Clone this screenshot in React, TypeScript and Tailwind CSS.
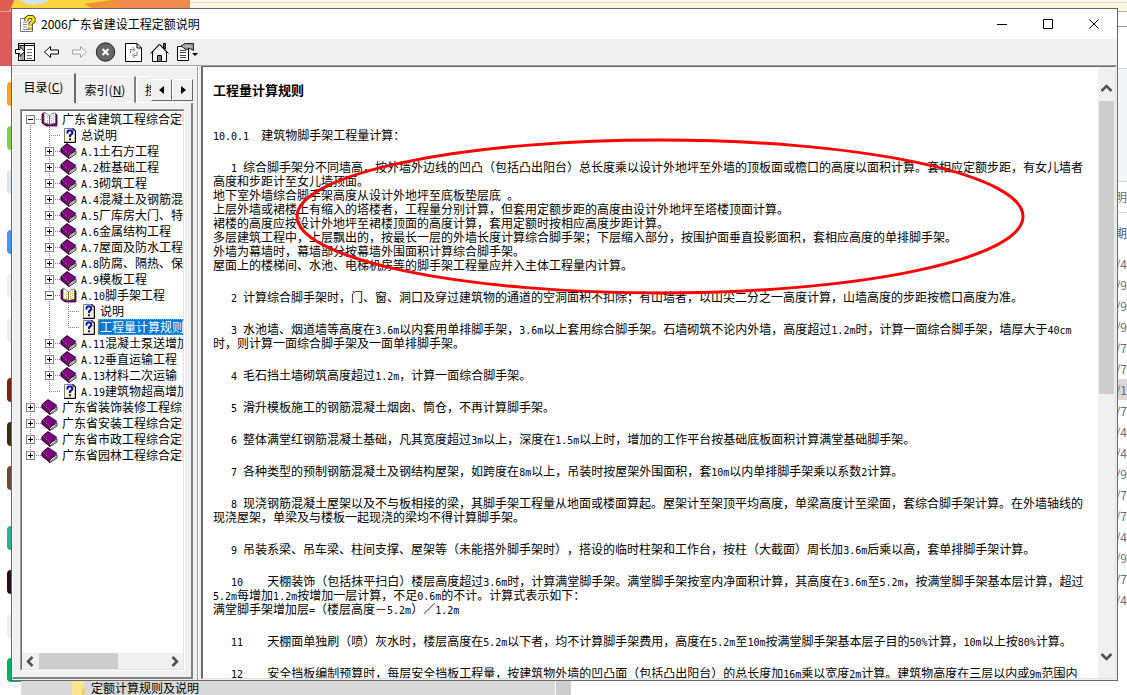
import React, { useState } from 'react';

type TreeNode = { label: string; kind: 'book' | 'open' | 'page'; rails: string };

// rails: one letter per indent cell
// v = line passing through, t = tee, l = last corner, f = first row, + / - = expander, p = expander on the last row
const TREE: TreeNode[] = [
  { label: '广东省建筑工程综合定额', kind: 'open', rails: 'f' },
  { label: '总说明', kind: 'page', rails: 'vt' },
  { label: 'A.1土石方工程', kind: 'book', rails: 'v+' },
  { label: 'A.2桩基础工程', kind: 'book', rails: 'v+' },
  { label: 'A.3砌筑工程', kind: 'book', rails: 'v+' },
  { label: 'A.4混凝土及钢筋混凝土工程', kind: 'book', rails: 'v+' },
  { label: 'A.5厂库房大门、特种门', kind: 'book', rails: 'v+' },
  { label: 'A.6金属结构工程', kind: 'book', rails: 'v+' },
  { label: 'A.7屋面及防水工程', kind: 'book', rails: 'v+' },
  { label: 'A.8防腐、隔热、保温工程', kind: 'book', rails: 'v+' },
  { label: 'A.9模板工程', kind: 'book', rails: 'v+' },
  { label: 'A.10脚手架工程', kind: 'open', rails: 'v-' },
  { label: '说明', kind: 'page', rails: 'vvt' },
  { label: '工程量计算规则', kind: 'page', rails: 'vvl' },
  { label: 'A.11混凝土泵送增加费', kind: 'book', rails: 'v+' },
  { label: 'A.12垂直运输工程', kind: 'book', rails: 'v+' },
  { label: 'A.13材料二次运输', kind: 'book', rails: 'v+' },
  { label: 'A.19建筑物超高增加费', kind: 'page', rails: 'vl' },
  { label: '广东省装饰装修工程综合定额', kind: 'book', rails: '+' },
  { label: '广东省安装工程综合定额', kind: 'book', rails: '+' },
  { label: '广东省市政工程综合定额', kind: 'book', rails: '+' },
  { label: '广东省园林工程综合定额', kind: 'book', rails: 'p' },
];

const PARAGRAPHS = [
  '10.0.1  建筑物脚手架工程量计算：',
  `   1 综合脚手架分不同墙高，按外墙外边线的凹凸（包括凸出阳台）总长度乘以设计外地坪至外墙的顶板面或檐口的高度以面积计算。套相应定额步距，有女儿墙者高度和步距计至女儿墙顶面。
地下室外墙综合脚手架高度从设计外地坪至底板垫层底 。
上层外墙或裙楼上有缩入的塔楼者，工程量分别计算，但套用定额步距的高度由设计外地坪至塔楼顶面计算。
裙楼的高度应按设计外地坪至裙楼顶面的高度计算，套用定额时按相应高度步距计算。
多层建筑工程中，上层飘出的，按最长一层的外墙长度计算综合脚手架；下层缩入部分，按围护面垂直投影面积，套相应高度的单排脚手架。
外墙为幕墙时，幕墙部分按幕墙外围面积计算综合脚手架。
屋面上的楼梯间、水池、电梯机房等的脚手架工程量应并入主体工程量内计算。`,
  '   2 计算综合脚手架时，门、窗、洞口及穿过建筑物的通道的空洞面积不扣除；有山墙者，以山尖二分之一高度计算，山墙高度的步距按檐口高度为准。',
  '   3 水池墙、烟道墙等高度在3.6m以内套用单排脚手架，3.6m以上套用综合脚手架。石墙砌筑不论内外墙，高度超过1.2m时，计算一面综合脚手架，墙厚大于40cm时，则计算一面综合脚手架及一面单排脚手架。',
  '   4 毛石挡土墙砌筑高度超过1.2m，计算一面综合脚手架。',
  '   5 滑升模板施工的钢筋混凝土烟囱、筒仓，不再计算脚手架。',
  '   6 整体满堂红钢筋混凝土基础，凡其宽度超过3m以上，深度在1.5m以上时，增加的工作平台按基础底板面积计算满堂基础脚手架。',
  '   7 各种类型的预制钢筋混凝土及钢结构屋架，如跨度在8m以上，吊装时按屋架外围面积，套10m以内单排脚手架乘以系数2计算。',
  '   8 现浇钢筋混凝土屋架以及不与板相接的梁，其脚手架工程量从地面或楼面算起。屋架计至架顶平均高度，单梁高度计至梁面，套综合脚手架计算。在外墙轴线的现浇屋架，单梁及与楼板一起现浇的梁均不得计算脚手架。',
  '   9 吊装系梁、吊车梁、柱间支撑、屋架等（未能搭外脚手架时），搭设的临时柱架和工作台，按柱（大截面）周长加3.6m后乘以高，套单排脚手架计算。',
  `   10    天棚装饰（包括抹平扫白）楼层高度超过3.6m时，计算满堂脚手架。满堂脚手架按室内净面积计算，其高度在3.6m至5.2m，按满堂脚手架基本层计算，超过5.2m每增加1.2m按增加一层计算，不足0.6m的不计。计算式表示如下：
满堂脚手架增加层=（楼层高度－5.2m）／1.2m`,
  '   11    天棚面单独刷（喷）灰水时，楼层高度在5.2m以下者，均不计算脚手架费用，高度在5.2m至10m按满堂脚手架基本层子目的50%计算，10m以上按80%计算。',
  '   12    安全挡板编制预算时，每层安全挡板工程量，按建筑物外墙的凹凸面（包括凸出阳台）的总长度加16m乘以宽度2m计算。建筑物高度在三层以内或9m范围内',
];

const DATES = ['/4', '/9', '/9', '/9', '/7', '/7', '/1', '/7', '/4', '/4', '/9', '/7', '/7', '/4', '/9', '/7', '/4'];

const DOCK = [
  ['bg-[#ff9d1e]', 'bg-[#7fd04f]', 'bg-[#dfe5f0]'],
  ['bg-[#4394ff]', 'bg-[#efefef]', 'bg-[#ececec]'],
  ['bg-[#7a2312]', 'bg-[#3a2d12]', 'bg-[#6b4a38]'],
  ['bg-[#25b58a]', 'bg-[#2b0a1e]', 'bg-[#eeeeee]', 'bg-[#06b25f]'],
];

// half-width runs are set in a monospace face so they take half of a Chinese character
function Mixed({ text }: { text: string }) {
  return (
    <>
      {text.split(/([ -~]+)/).map((part, i) =>
        i % 2 === 1 ? (
          <span key={i} className="font-['DejaVu_Sans_Mono',monospace] text-[10px] leading-none">{part}</span>
        ) : (
          part
        )
      )}
    </>
  );
}

function Rail({ type }: { type: string }) {
  const box = '+-pf'.includes(type);
  const plus = type === '+' || type === 'p';
  const up = type !== 'f';
  const down = type !== 'l' && type !== 'p';
  return (
    <svg width="19" height="16" viewBox="0 0 19 16" className="shrink-0" shapeRendering="crispEdges" fill="none">
      <g stroke="#808080" strokeDasharray="1 1">
        {up && <path d="M8.5 0V8" />}
        {down && <path d="M8.5 8V16" />}
        {type !== 'v' && <path d="M8 8.5H19" />}
      </g>
      {box && (
        <>
          <rect x="4.5" y="4.5" width="8" height="8" fill="#fff" stroke="#808080" />
          <path d={plus ? 'M6 8.5H11M8.5 6V11' : 'M6 8.5H11'} stroke="#000" />
        </>
      )}
    </svg>
  );
}

function NodeIcon({ kind }: { kind: TreeNode['kind'] }) {
  if (kind === 'page') {
    return (
      <svg width="19" height="16" viewBox="0 0 19 16" className="shrink-0">
        <path d="M4.500 1.500H13L15 3V15H4.500Z" fill="#ffffc8" stroke="#808080" />
        <path d="M15.500 3V15.500H4" fill="none" stroke="#000" />
        <path d="M13 1V3H15" fill="none" stroke="#000" />
        <path d="M7.500 6.500V4.500L8.500 3.500H11L12.200 4.500V6.500L10 8.500V10M10 11.300V13.300" fill="none" stroke="#0000e0" strokeWidth="2" />
      </svg>
    );
  }
  if (kind === 'open') {
    return (
      <svg width="19" height="16" viewBox="0 0 19 16" className="shrink-0">
        <path d="M1 3L3 2V12L8 13.500L15 12V3L16 4V15H5L1 12Z" fill="#800080" stroke="#300030" strokeWidth=".8" />
        <path d="M3 1L6.500 3L8.500 5V13.500L6 12.500L3 12Z" fill="#fff" stroke="#555" strokeWidth=".8" />
        <path d="M8.500 13.500V5L11 2.500L14.500 2V12L10.500 13Z" fill="#fff" stroke="#555" strokeWidth=".8" />
        <path d="M6.500 5V12M10.500 5V12M12.500 4V11" stroke="#c8c000" strokeDasharray="1 1" />
      </svg>
    );
  }
  return (
    <svg width="19" height="16" viewBox="0 0 19 16" className="shrink-0">
      <path d="M1 6L8 12.500L16 8V11L9 15.500L1 9Z" fill="#fff" stroke="#000" strokeWidth=".8" />
      <path d="M1 5.500L7 .5L16 6.500L9 12.500Z" fill="#800080" stroke="#000" strokeWidth=".8" />
      <path d="M1 5.500L9 12.500V15.500L1 9Z" fill="#800080" stroke="#000" strokeWidth=".6" />
      <path d="M2 5.500L9 11.500" stroke="#e0b0e0" strokeWidth=".8" strokeDasharray="1 1" />
      <path d="M10 13.500L16 9.500" stroke="#808080" />
    </svg>
  );
}

function Chevron({ d }: { d: string }) {
  return (
    <svg width="13" height="13" viewBox="0 0 13 13" fill="none" stroke="#505050" strokeWidth="2.500">
      <path d={d} />
    </svg>
  );
}

const TOOLS = [
  {
    name: '隐藏',
    icon: (
      <>
        <rect x="6.500" y="1.500" width="16" height="17" fill="#fff" stroke="#000" />
        <path d="M7 3.500H22M12.500 2V18" stroke="#000" />
        <path d="M8 4H12V18H8Z" fill="#a8a8a8" />
        <path d="M15 7.500H20M15 10.500H20M15 13.500H20M15 16.500H20" stroke="#707070" />
        <path d="M3.500 7.500H8V4.500L12.500 9.500L8 14.500V11.500H3.500Z" fill="#fff" stroke="#000" />
      </>
    ),
  },
  { name: '后退', icon: <path d="M5.500 10L11.500 4.500V8H19.500V12H11.500V15.500Z" fill="#fff" stroke="#000" /> },
  { name: '前进', icon: <path d="M20.500 10L14.500 4.500V8H6.500V12H14.500V15.500Z" fill="#f6f6f6" stroke="#a0a0a0" /> },
  {
    name: '停止',
    icon: (
      <>
        <circle cx="12.500" cy="10" r="9.200" fill="#666" stroke="#222" />
        <path d="M9.500 7L15.500 13M15.500 7L9.500 13" stroke="#fff" strokeWidth="2" />
      </>
    ),
  },
  {
    name: '刷新',
    icon: (
      <>
        <path d="M5.500 1.500H17L21.500 6V19.500H5.500Z" fill="#fff" stroke="#000" />
        <path d="M17 1.500V6H21.500" fill="none" stroke="#000" />
        <path d="M10.500 11V7.500H14M12.500 5L15 7.500L12.500 10M17 9.500V13.500H13.500M15 11L12.500 13.500L15 16" fill="none" stroke="#808080" />
      </>
    ),
  },
  {
    name: '主页',
    icon: (
      <>
        <path d="M16.500 1.500H18.500V7H16.500Z" fill="#555" stroke="#000" />
        <path d="M5.500 10V19.500H19.500V10L12.500 2.500Z" fill="#fff" stroke="#000" />
        <path d="M3.500 11.500L12.500 2L21.500 11.500" fill="none" stroke="#000" />
        <path d="M10.500 19.500V13.500H14.500V19.500Z" fill="#777" stroke="#000" />
      </>
    ),
  },
  {
    name: '选项',
    icon: (
      <>
        <path d="M3.500 4.500H14.500V18.500H3.500Z" fill="#fff" stroke="#000" />
        <path d="M6 8.500H12M6 10.500H12M6 13.500H12M6 15.500H12" stroke="#444" />
        <path d="M7 4L11 1.500H19.500V8.500L16 6.500L12 7.500Z" fill="#999" stroke="#222" />
        <path d="M9 4.500H16M12 3L18 5.500" stroke="#ddd" strokeDasharray="1 1" />
        <path d="M18 11H24L21 14Z" fill="#000" />
      </>
    ),
  },
];

function HelpWindow() {
  const [selected, setSelected] = useState(13);

  return (
    <div className="absolute top-2 right-[9px] bottom-[14px] left-[11px] flex flex-col border border-[#696969] bg-[#f0f0f0] text-black">
      <header className="flex h-[30px] shrink-0 items-center bg-white">
        <svg width="18" height="18" viewBox="0 0 18 18" className="ml-[7px]">
          <path d="M1.500 3.500H11.500L13.500 5.500V16.500H1.500Z" fill="#fff" stroke="#777" />
          <path d="M4 7H9M4 9.500H8M4 12H8M4 14.500H10" stroke="#888" />
          <path d="M7.500 6V3.500L9.500 2H13L14.500 3.500V6L11.500 8.500V10.500M11.500 12V14.500" fill="none" stroke="#222" strokeWidth="4" />
          <path d="M7.500 6V3.500L9.500 2H13L14.500 3.500V6L11.500 8.500V10.500M11.500 12V14.500" fill="none" stroke="#ffef00" strokeWidth="2.400" />
        </svg>
        <h1 className="ml-1 flex-1 truncate text-xs">2006广东省建设工程定额说明</h1>
        {[
          ['最小化', 'M0 5.5H10'],
          ['最大化', 'M.5 .5H9.5V9.5H.5Z'],
          ['关闭', 'M.5 .5L9.500 9.500M9.500 .5L.5 9.500'],
        ].map(([name, d]) => (
          <button key={name} aria-label={name} className="flex h-full w-[46px] items-center justify-center hover:bg-gray-200">
            <svg width="10" height="10" viewBox="0 0 10 10" fill="none" stroke="#000"><path d={d} /></svg>
          </button>
        ))}
      </header>

      <div className="flex h-[26px] shrink-0 items-center">
        {TOOLS.map((tool) => (
          <button key={tool.name} aria-label={tool.name} className="h-full w-[27px]">
            <svg width="27" height="21" viewBox="0 0 27 21" fill="none">{tool.icon}</svg>
          </button>
        ))}
      </div>

      <div className="flex min-h-0 flex-1 border-t border-[#a0a0a0]">
        <nav className="flex w-[186px] shrink-0 flex-col border-t border-r border-t-white border-r-[#a0a0a0]">
          <div className="flex h-9 shrink-0 items-end overflow-hidden">
            <button className="flex h-[30px] w-[64px] items-center justify-center rounded-tl-sm border-t border-r-2 border-l border-t-white border-r-[#696969] border-l-white pb-1 text-xs">
              目录(<u>C</u>)
            </button>
            <button className="flex h-[27px] w-[60px] items-center justify-center border-t border-r-2 border-b border-t-white border-r-[#808080] border-b-white text-xs">
              索引(<u>N</u>)
            </button>
            <div className="flex h-[27px] min-w-0 flex-1 border-b border-white">
              <button className="w-[15px] shrink-0 overflow-hidden border-t border-l border-white pl-2 text-left text-xs whitespace-nowrap">搜索(<u>S</u>)</button>
              {['M7 1V9L2 5Z', 'M3 1V9L8 5Z'].map((d, i) => (
                <button
                  key={d}
                  aria-label={i ? '后一个标签' : '前一个标签'}
                  className="mt-[3px] flex h-[22px] w-[21px] shrink-0 items-center justify-center border border-t-white border-r-[#696969] border-b-[#696969] border-l-white bg-[#f0f0f0]"
                >
                  <svg width="10" height="10" viewBox="0 0 10 10"><path d={d} /></svg>
                </button>
              ))}
            </div>
          </div>

          <div className="mr-1 mb-px flex min-h-0 flex-1 flex-col border-r-2 border-b-2 border-l border-r-[#808080] border-b-[#808080] border-l-white pt-1.5 pr-1.5 pb-1.5 pl-[7px]">
            <div className="flex min-h-0 flex-1 flex-col border border-t-[#a0a0a0] border-r-white border-b-white border-l-[#a0a0a0]">
              <div className="flex min-h-0 flex-1 flex-col border border-t-[#696969] border-r-[#e3e3e3] border-b-[#e3e3e3] border-l-[#696969] bg-white">
                <ul className="min-h-0 flex-1 overflow-hidden">
                  {TREE.map((node, i) => (
                    <li key={node.label} className="flex h-4">
                      {node.rails.split('').map((r, j) => <Rail key={j} type={r} />)}
                      <NodeIcon kind={node.kind} />
                      <button
                        onClick={() => setSelected(i)}
                        className={`h-4 px-[2px] text-xs leading-4 whitespace-nowrap ${
                          i === selected ? 'bg-[#0078d7] text-white outline outline-dotted -outline-offset-1 outline-[#ff8728]' : ''
                        }`}
                      >
                        <Mixed text={node.label} />
                      </button>
                    </li>
                  ))}
                </ul>
                <div className="flex h-4 shrink-0 items-center bg-[#f0f0f0]">
                  <span className="flex w-[17px] justify-center"><Chevron d="M8.500 2L4 6.500L8.500 11" /></span>
                  <span className="h-full w-[49%] bg-[#cdcdcd]" />
                  <span className="ml-auto flex w-[17px] justify-center"><Chevron d="M4.500 2L9 6.500L4.500 11" /></span>
                </div>
              </div>
            </div>
          </div>
        </nav>

        <div className="w-[3px] shrink-0 border-l border-white" />

        <main className="mr-px mb-px flex min-w-0 flex-1 border-t border-r border-b border-l-2 border-t-[#696969] border-r-[#e3e3e3] border-b-[#e3e3e3] border-l-[#696969] bg-white">
          <article className="relative min-w-0 flex-1 overflow-hidden px-[10px] pt-4 text-xs leading-[14px] whitespace-pre-wrap">
            <h2 className="mb-[31px] text-[13px] leading-[14px] font-bold">工程量计算规则</h2>
            <div className="flex flex-col gap-[18px]">
              {PARAGRAPHS.map((p) => (
                <p key={p}><Mixed text={p} /></p>
              ))}
            </div>
            <svg width="730" height="158" viewBox="0 0 730 158" className="pointer-events-none absolute top-[71px] left-[92px]">
              <ellipse cx="365" cy="78.500" rx="363" ry="76.500" fill="none" stroke="#f00" strokeWidth="3" />
            </svg>
          </article>
          <div className="flex w-[17px] shrink-0 flex-col items-center bg-[#f0f0f0]">
            <span className="flex h-[34px] shrink-0 items-end pb-[6px]"><Chevron d="M1.500 9L6.500 4L11.500 9" /></span>
            <span className="h-[48%] w-[15px] bg-[#cdcdcd]" />
            <span className="mt-auto flex h-[34px] shrink-0 items-start pt-[6px]"><Chevron d="M1.500 4L6.500 9L11.500 4" /></span>
          </div>
        </main>
      </div>
    </div>
  );
}

export default function App() {
  return (
    <div className="relative flex h-screen flex-col overflow-hidden bg-white font-['Noto_Sans_CJK_SC',sans-serif] [text-spacing-trim:space-all]">
      {/* desktop behind the help window */}
      <div className="flex h-3 shrink-0 border-b border-[#b8aea0] bg-[#fdf5e6]">
        <svg width="190" height="11" viewBox="0 0 190 11" className="shrink-0">
          <rect width="190" height="11" fill="#f0913c" />
          <path d="M0 0H18L8 11H0Z" fill="#e05c50" />
          <path d="M14 0H112L84 4L98 11H10Z" fill="#f9d43c" />
          <path d="M112 0H190V11H130Z" fill="#ef8a4a" />
          <ellipse cx="34" cy="-4" rx="16" ry="9" fill="#cfe4ee" />
        </svg>
        <div className="mb-2 flex-1 border-b border-[#e8dcc8] bg-[#fffaf0]" />
      </div>

      <div className="flex min-h-0 flex-1 justify-between">
        <div className="flex w-[22px] shrink-0 flex-col">
          <div className="h-[54px] shrink-0 bg-[#dc5a5c]" />
          <div className="flex flex-col gap-9 pt-4 pl-[7px]">
            {DOCK.map((group, i) => (
              <div key={i} className="flex flex-col gap-5">
                {group.map((color) => <span key={color} className={`h-6 rounded-l ${color}`} />)}
              </div>
            ))}
          </div>
        </div>

        <aside className="flex w-6 shrink-0 flex-col text-xs whitespace-nowrap text-[#6d6d6d]">
          <div className="h-[15px] shrink-0 border-b border-[#999]" />
          <div className="h-[42px] shrink-0 border-b border-[#d5d5d5]" />
          <div className="h-[113px] shrink-0 border-b border-[#d5d5d5] bg-[#f4f5f8]" />
          <div className="flex h-[31px] shrink-0 items-center justify-end border-b border-[#d5d5d5]">说明</div>
          <div className="flex h-10 shrink-0 items-center justify-end text-[#43587a]">日期</div>
          {DATES.map((d, i) => (
            <div key={i} className={`flex h-[21px] shrink-0 items-center justify-end ${i === 6 ? 'bg-[#d9d9d9]' : ''}`}>{d}</div>
          ))}
        </aside>
      </div>

      <footer className="flex h-[14px] shrink-0 items-center pl-[21px]">
        <div className="flex h-full w-[534px] items-center bg-[#d9d9d9] pl-[51px]">
          <svg width="13" height="14" viewBox="0 0 13 14">
            <path d="M0 0H12V14H0Z" fill="#ffe38d" />
            <path d="M10 8H12.500V14H10Z" fill="#f3cd5d" />
          </svg>
          <span className="ml-[6px] text-xs leading-[14px]">定额计算规则及说明</span>
        </div>
        <span className="h-full w-4 border-l border-white bg-[#cdcdcd]" />
      </footer>

      <HelpWindow />
    </div>
  );
}
